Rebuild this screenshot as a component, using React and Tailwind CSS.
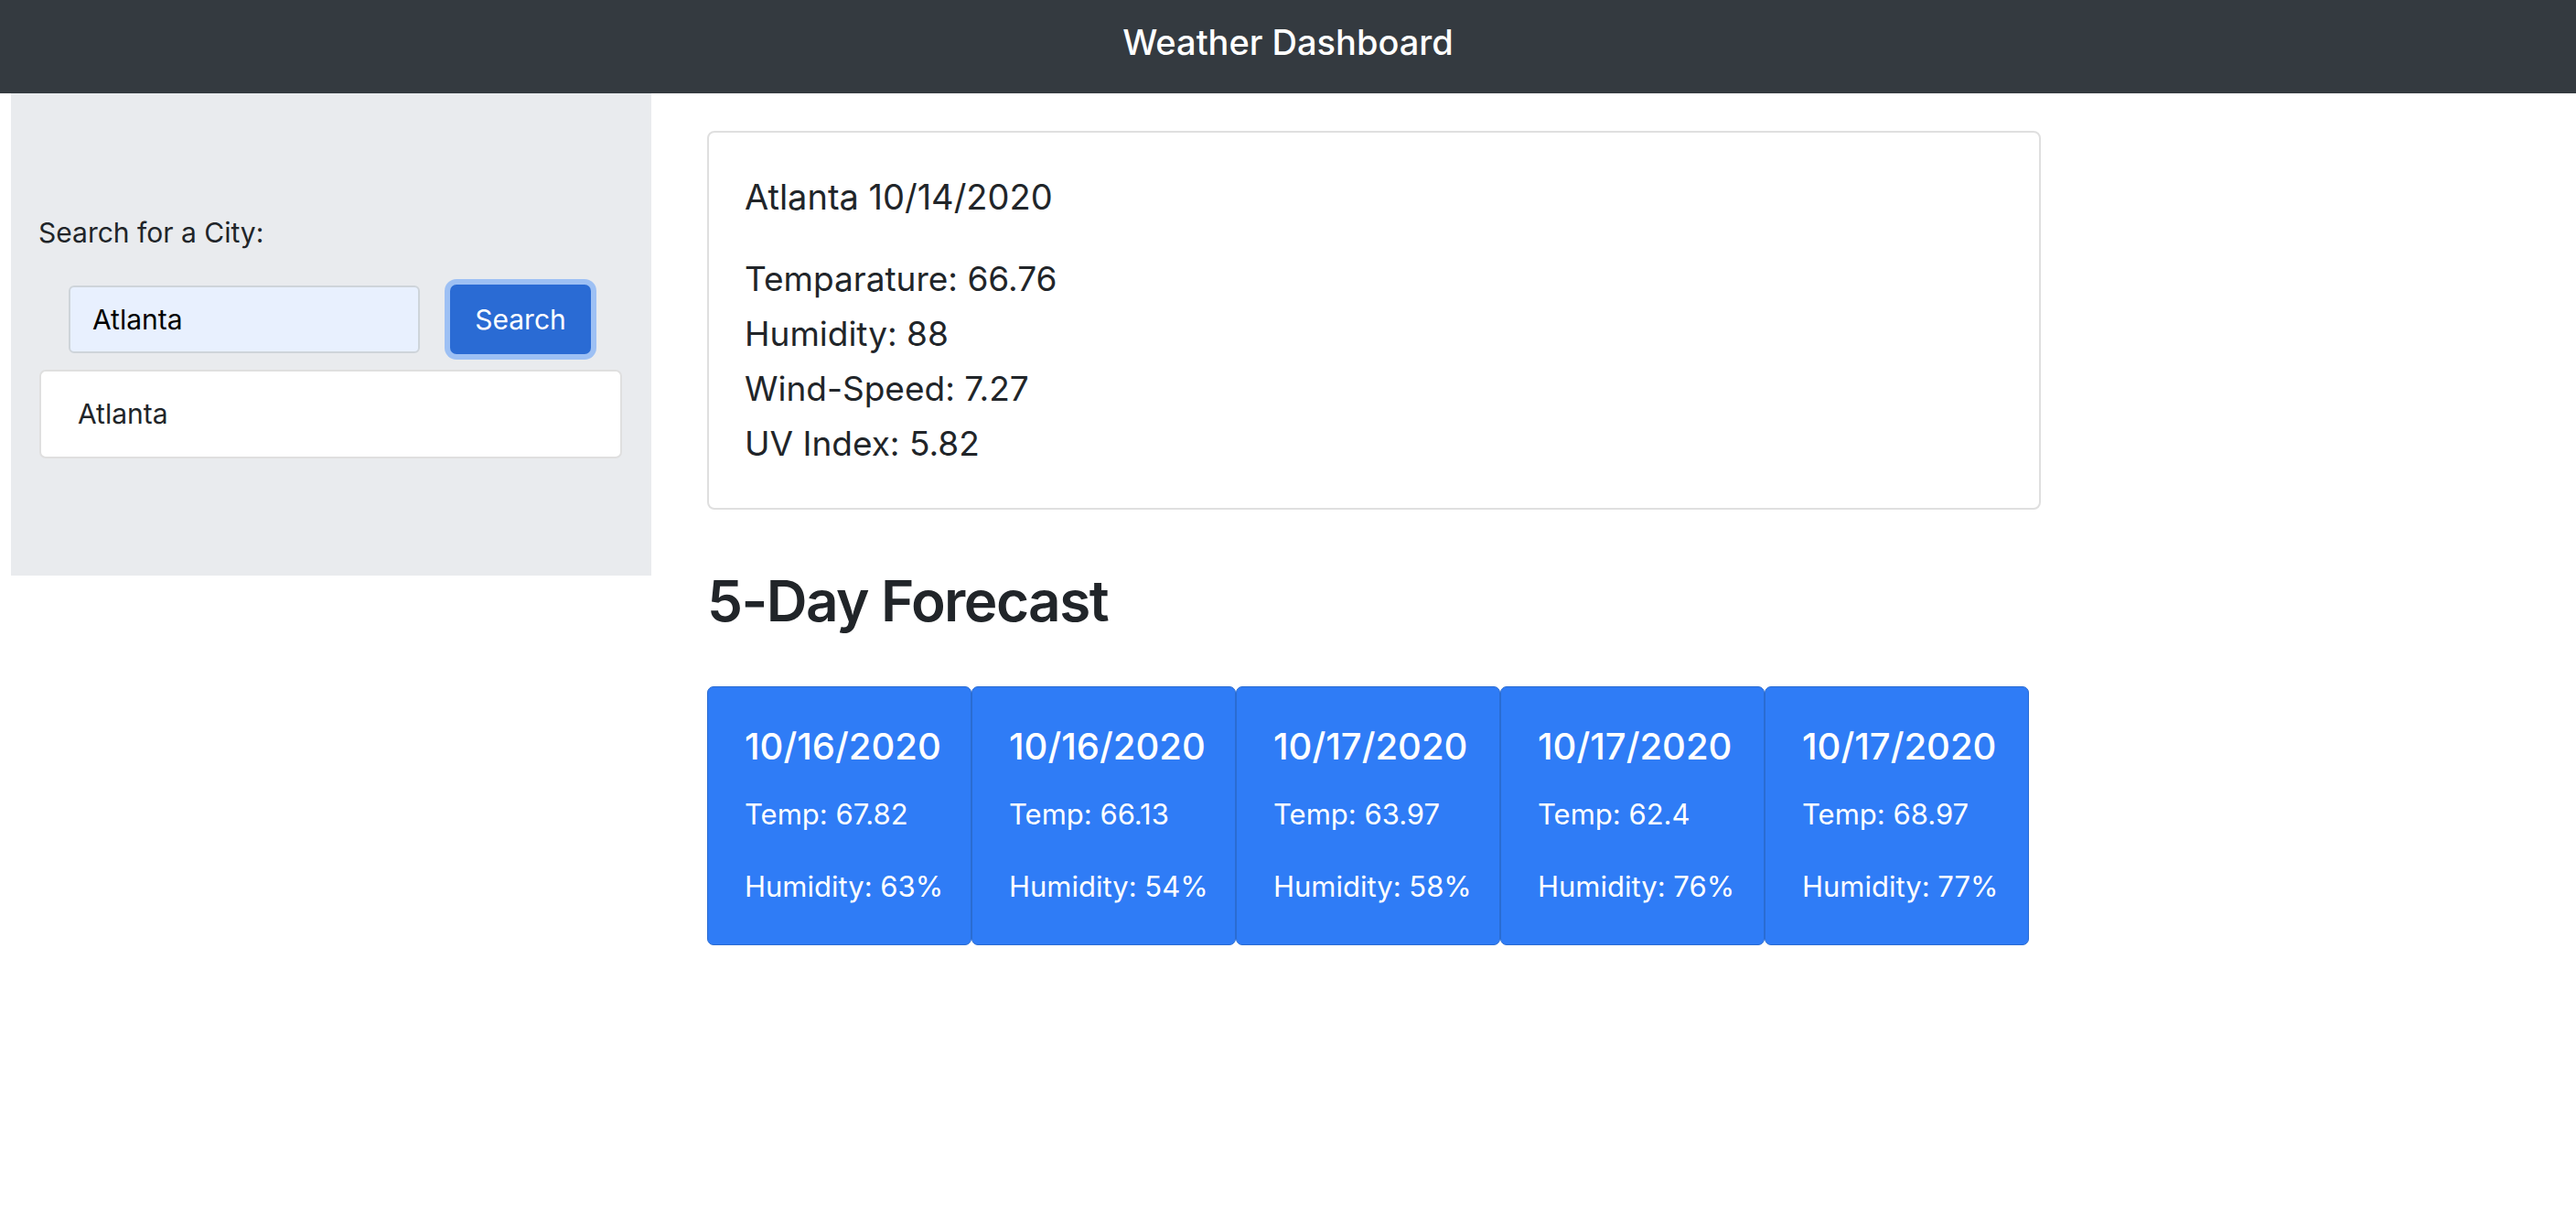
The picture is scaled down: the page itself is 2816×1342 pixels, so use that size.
import React from "react";

const forecast = [
  { date: "10/16/2020", temp: "67.82", humidity: "63%" },
  { date: "10/16/2020", temp: "66.13", humidity: "54%" },
  { date: "10/17/2020", temp: "63.97", humidity: "58%" },
  { date: "10/17/2020", temp: "62.4", humidity: "76%" },
  { date: "10/17/2020", temp: "68.97", humidity: "77%" },
];

const font = { fontFamily: "Inter, 'Noto Sans', sans-serif" };

function Header() {
  return (
    <header className="h-[102px] bg-[#343a40] flex justify-center pt-[27px]">
      <h1 className="text-[38px] leading-none font-medium text-white">
        Weather Dashboard
      </h1>
    </header>
  );
}

function Sidebar() {
  return (
    <aside className="ml-[12px] w-[700px] h-[527px] bg-[#e9ebee] pt-[137px] pl-[30px]">
      <p className="text-[30px] leading-none text-[#212529]">Search for a City:</p>
      <div className="flex items-center mt-[42px] ml-[33px] gap-[33px]">
        <input
          className="w-[384px] h-[74px] rounded-[6px] border-2 border-[#ced4da] bg-[#e8f0fe] px-[24px] text-[30px] text-black outline-none"
          style={font}
          defaultValue="Atlanta"
        />
        <button className="w-[154px] h-[76px] rounded-[7px] bg-[#2a6bd4] text-white text-[30px] ring-[6px] ring-[#9dc0f4]">
          Search
        </button>
      </div>
      <ul className="mt-[17px] w-[637px] ml-px">
        <li className="h-[97px] flex items-center rounded-[7px] border-2 border-[#dfdfdf] bg-white pl-[40px] text-[30px] text-[#212529]">
          Atlanta
        </li>
      </ul>
    </aside>
  );
}

function CurrentWeather() {
  return (
    <div className="w-[1458px] h-[414px] rounded-[8px] border-2 border-[#dfdfdf] bg-white pt-[51px] pl-[39px] text-[#212529]">
      <h5 className="text-[38px] leading-none">Atlanta 10/14/2020</h5>
      <div className="mt-[41px] text-[37px] leading-[60px]">
        <p>Temparature: 66.76</p>
        <p>Humidity: 88</p>
        <p>Wind-Speed: 7.27</p>
        <p>UV Index: 5.82</p>
      </div>
    </div>
  );
}

function ForecastCard({ day }) {
  return (
    <div className="w-[289px] h-[283px] rounded-[7px] border border-[#2a6cd2] bg-[#2f7cf6] pt-[45px] pl-[40px] text-white">
      <h5 className="text-[40px] leading-none font-medium">{day.date}</h5>
      <p className="mt-[38px] text-[31px] leading-none">Temp: {day.temp}</p>
      <p className="mt-[48px] text-[31px] leading-none">Humidity: {day.humidity}</p>
    </div>
  );
}

export default function App() {
  return (
    <div className="min-h-screen bg-white" style={font}>
      <Header />
      <div className="flex">
        <Sidebar />
        <main className="ml-[61px] pt-[41px]">
          <CurrentWeather />
          <h2 className="mt-[69px] text-[62px] leading-none font-semibold tracking-tight text-[#212529]">
            5-Day Forecast
          </h2>
          <div className="mt-[62px] flex">
            {forecast.map((day, i) => (
              <ForecastCard key={i} day={day} />
            ))}
          </div>
        </main>
      </div>
    </div>
  );
}
